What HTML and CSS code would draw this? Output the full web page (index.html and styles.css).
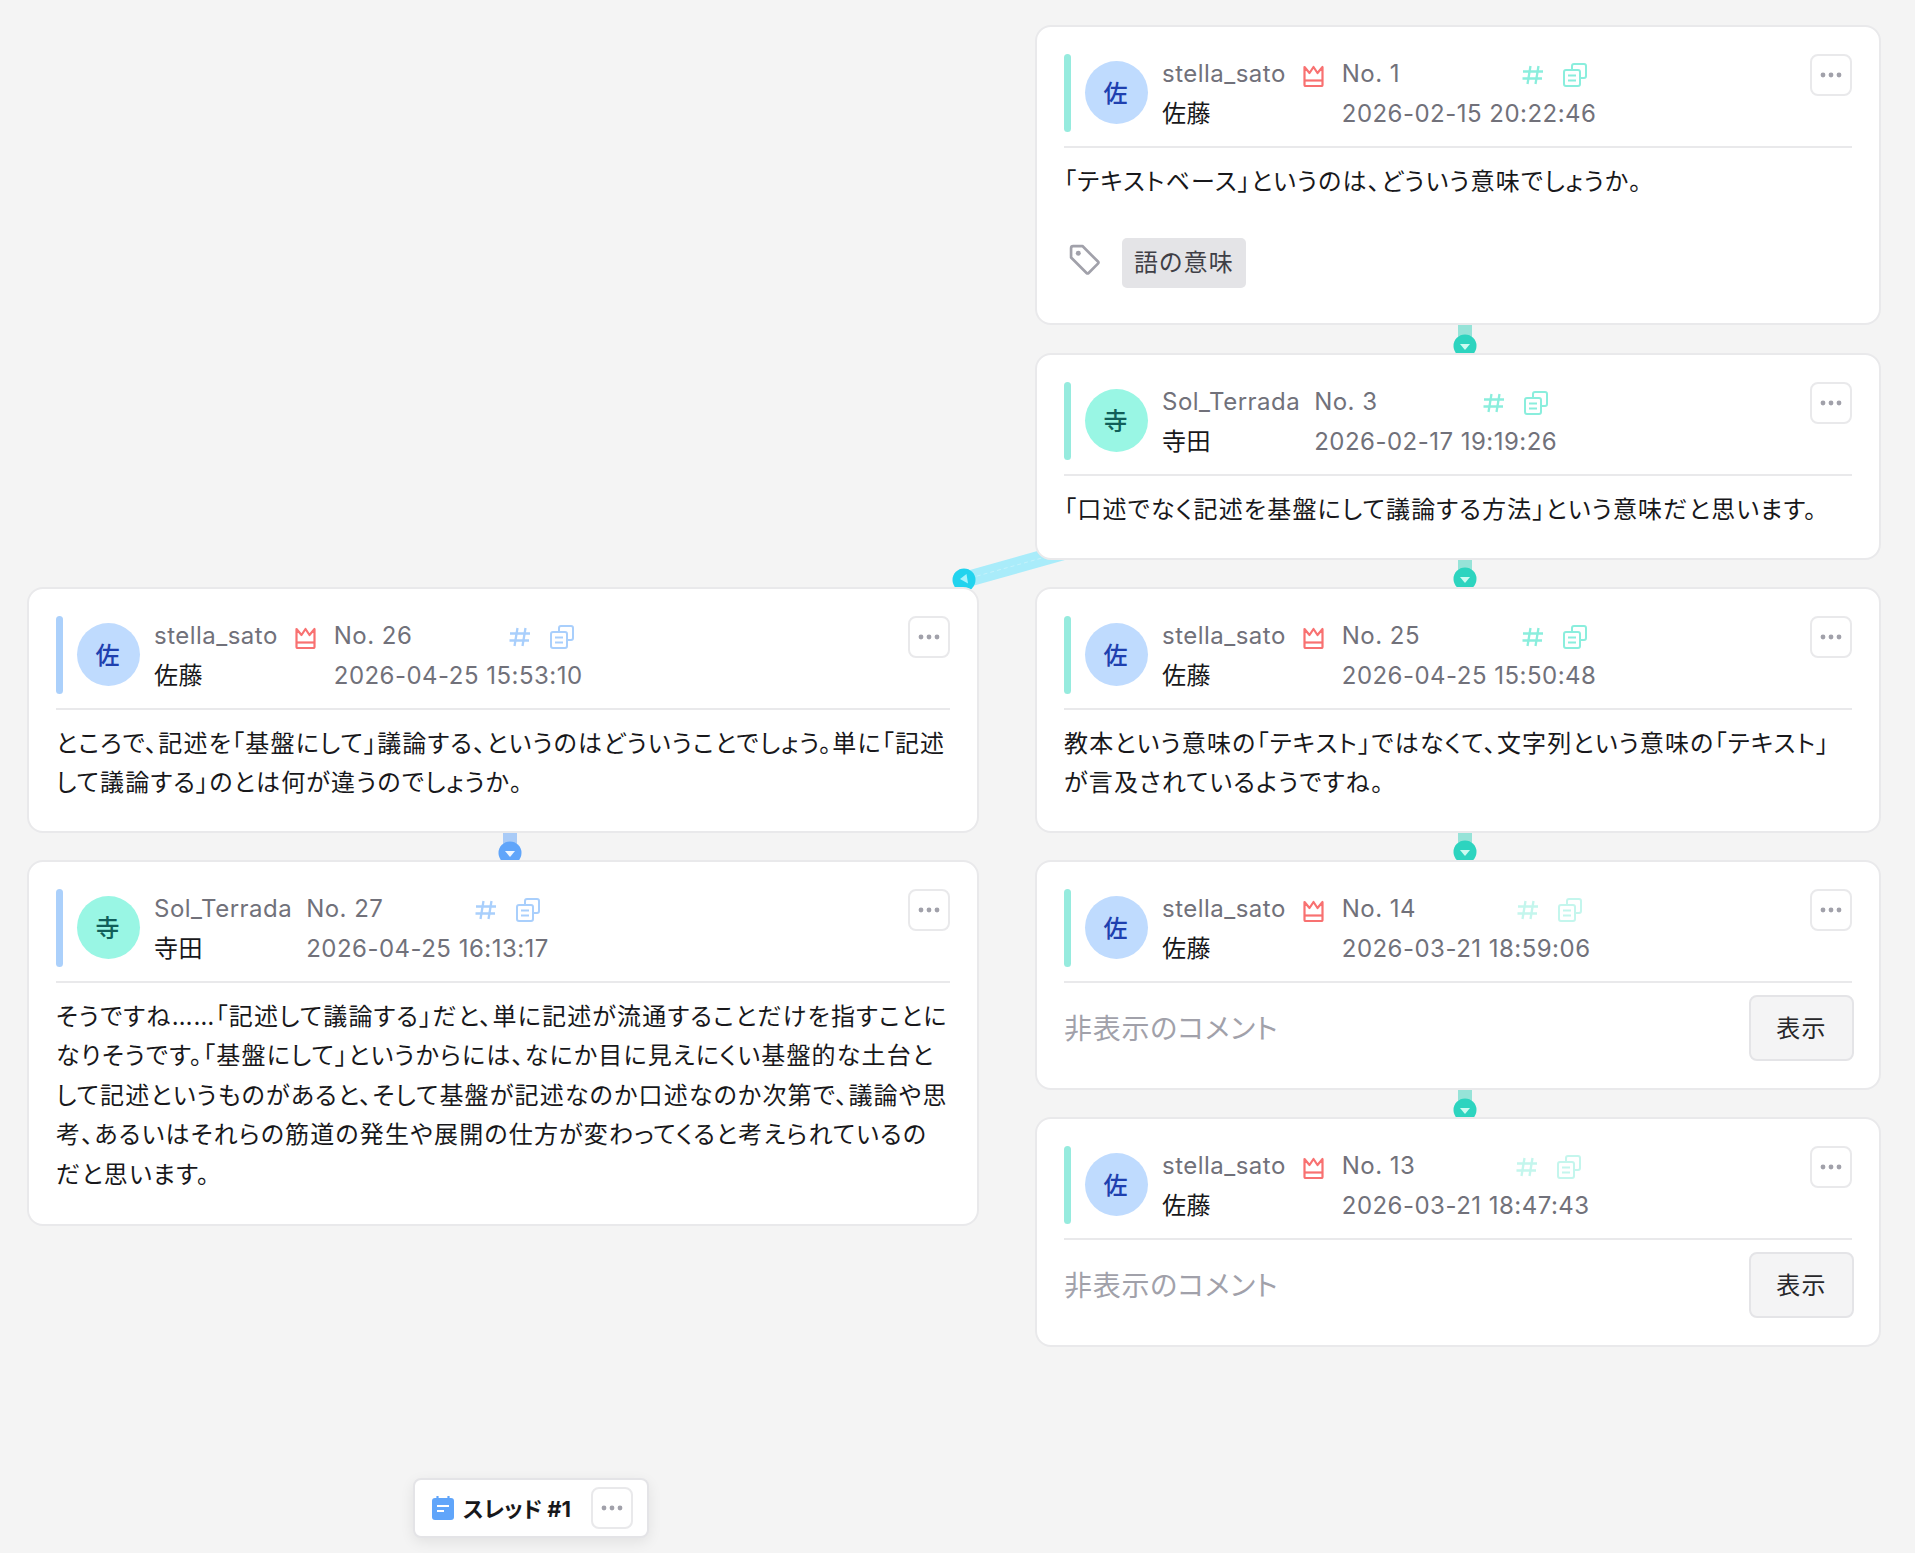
FILE: index.html
```html
<!DOCTYPE html>
<html lang="ja">
<head>
<meta charset="utf-8">
<title>スレッド #1</title>
<link rel="stylesheet" href="styles.css">
</head>
<body>
<svg width="0" height="0" class="defs">
  <defs>
    <symbol id="i-crown" viewBox="0 0 29 22">
      <path d="M5.500 2 L10.500 8 L14.500 2 L18.500 8 L23.500 2 V20 Q23.500 21 22.500 21 H6.500 Q5.500 21 5.500 20 Z" fill="none" stroke="currentColor" stroke-width="2.200" stroke-linejoin="round"/>
      <path d="M5.500 15.500 H23.500" stroke="currentColor" stroke-width="2.200"/>
    </symbol>
    <symbol id="i-hash" viewBox="0 0 22 22">
      <path d="M1 7.500 H21 M0.500 14.500 H20 M8.500 2 L5.500 20 M16.500 2 L13.500 20" fill="none" stroke="currentColor" stroke-width="2.300"/>
    </symbol>
    <symbol id="i-copy" viewBox="0 0 24 24">
      <path d="M9 7 V3 Q9 1 11 1 H21 Q23 1 23 3 V13 Q23 15 21 15 H17" fill="none" stroke="currentColor" stroke-width="2"/>
      <rect x="1" y="7" width="16" height="16" rx="2" fill="none" stroke="currentColor" stroke-width="2"/>
      <path d="M5 12.500 H13 M5 17.500 H13" stroke="currentColor" stroke-width="2"/>
    </symbol>
    <symbol id="i-dots" viewBox="0 0 22 6">
      <circle cx="3" cy="3" r="2.400" fill="currentColor"/>
      <circle cx="11" cy="3" r="2.400" fill="currentColor"/>
      <circle cx="19" cy="3" r="2.400" fill="currentColor"/>
    </symbol>
  </defs>
</svg>

<main class="canvas">
  <svg class="links" width="1915" height="1553" viewBox="0 0 1915 1553">
    <g class="teal">
      <path class="bar" d="M1465 322 V348"/>
      <circle cx="1465" cy="346" r="11.500"/><path class="tri" d="M1460 344 H1470 L1465 350 Z"/>
      <path class="bar" d="M1465 557 V581"/>
      <circle cx="1465" cy="579" r="11.500"/><path class="tri" d="M1460 577 H1470 L1465 583 Z"/>
      <path class="bar" d="M1465 830 V854"/>
      <circle cx="1465" cy="852" r="11.500"/><path class="tri" d="M1460 850 H1470 L1465 856 Z"/>
      <path class="bar" d="M1465 1086 V1112"/>
      <circle cx="1465" cy="1110" r="11.500"/><path class="tri" d="M1460 1108 H1470 L1465 1114 Z"/>
    </g>
    <g class="blue">
      <path class="bar" d="M510 829 V855"/>
      <circle cx="510" cy="853" r="11.500"/><path class="tri" d="M505 851 H515 L510 857 Z"/>
    </g>
    <g class="cyan">
      <path class="bar" d="M964 580 L1110 539"/>
      <path class="dash" d="M970 578 L1060 553"/>
      <circle cx="964" cy="580" r="11.500"/><path class="tri" d="M968 583.500 L960 579 L966.500 574 Z"/>
    </g>
  </svg>

  <article class="card right n1 teal-card">
    <header class="head">
      <div class="avatar av-blue">佐</div>
      <div class="who"><span class="handle">stella_sato</span><span class="real">佐藤</span></div>
      <svg class="crown"><use href="#i-crown"/></svg>
      <div class="meta">
        <div class="meta-top"><span>No. 1</span><span class="tools"><svg class="hash"><use href="#i-hash"/></svg><svg class="copy"><use href="#i-copy"/></svg></span></div>
        <time>2026-02-15 20:22:46</time>
      </div>
      <button class="more"><svg class="dots"><use href="#i-dots"/></svg></button>
    </header>
    <p class="body">「テキストベース」というのは、どういう意味でしょうか。</p>
    <div class="tags">
      <svg class="tag-icon" viewBox="0 0 30 30"><path d="M2 4 Q2 2 4 2 H13 L28 17 Q29 18 28 19 L19 28 Q18 29 17 28 L2 13 Z" fill="none" stroke="currentColor" stroke-width="2.600" stroke-linejoin="round"/><circle cx="9" cy="9" r="2.400" fill="currentColor"/></svg>
      <span class="tag">語の意味</span>
    </div>
  </article>

  <article class="card right n3 teal-card">
    <header class="head">
      <div class="avatar av-teal">寺</div>
      <div class="who"><span class="handle">Sol_Terrada</span><span class="real">寺田</span></div>
      <div class="meta">
        <div class="meta-top"><span>No. 3</span><span class="tools"><svg class="hash"><use href="#i-hash"/></svg><svg class="copy"><use href="#i-copy"/></svg></span></div>
        <time>2026-02-17 19:19:26</time>
      </div>
      <button class="more"><svg class="dots"><use href="#i-dots"/></svg></button>
    </header>
    <p class="body">「口述でなく記述を基盤にして議論する方法」という意味だと思います。</p>
  </article>

  <article class="card right n25 teal-card">
    <header class="head">
      <div class="avatar av-blue">佐</div>
      <div class="who"><span class="handle">stella_sato</span><span class="real">佐藤</span></div>
      <svg class="crown"><use href="#i-crown"/></svg>
      <div class="meta">
        <div class="meta-top"><span>No. 25</span><span class="tools"><svg class="hash"><use href="#i-hash"/></svg><svg class="copy"><use href="#i-copy"/></svg></span></div>
        <time>2026-04-25 15:50:48</time>
      </div>
      <button class="more"><svg class="dots"><use href="#i-dots"/></svg></button>
    </header>
    <p class="body">教本という意味の「テキスト」ではなくて、文字列という意味の「テキスト」が言及されているようですね。</p>
  </article>

  <article class="card right n14 teal-card">
    <header class="head">
      <div class="avatar av-blue">佐</div>
      <div class="who"><span class="handle">stella_sato</span><span class="real">佐藤</span></div>
      <svg class="crown"><use href="#i-crown"/></svg>
      <div class="meta">
        <div class="meta-top"><span>No. 14</span><span class="tools faded"><svg class="hash"><use href="#i-hash"/></svg><svg class="copy"><use href="#i-copy"/></svg></span></div>
        <time>2026-03-21 18:59:06</time>
      </div>
      <button class="more"><svg class="dots"><use href="#i-dots"/></svg></button>
    </header>
    <div class="hidden-row"><span class="hidden-note">非表示のコメント</span><button class="show">表示</button></div>
  </article>

  <article class="card right n13 teal-card">
    <header class="head">
      <div class="avatar av-blue">佐</div>
      <div class="who"><span class="handle">stella_sato</span><span class="real">佐藤</span></div>
      <svg class="crown"><use href="#i-crown"/></svg>
      <div class="meta">
        <div class="meta-top"><span>No. 13</span><span class="tools faded"><svg class="hash"><use href="#i-hash"/></svg><svg class="copy"><use href="#i-copy"/></svg></span></div>
        <time>2026-03-21 18:47:43</time>
      </div>
      <button class="more"><svg class="dots"><use href="#i-dots"/></svg></button>
    </header>
    <div class="hidden-row"><span class="hidden-note">非表示のコメント</span><button class="show">表示</button></div>
  </article>

  <article class="card left n26 blue-card">
    <header class="head">
      <div class="avatar av-blue">佐</div>
      <div class="who"><span class="handle">stella_sato</span><span class="real">佐藤</span></div>
      <svg class="crown"><use href="#i-crown"/></svg>
      <div class="meta">
        <div class="meta-top"><span>No. 26</span><span class="tools"><svg class="hash"><use href="#i-hash"/></svg><svg class="copy"><use href="#i-copy"/></svg></span></div>
        <time>2026-04-25 15:53:10</time>
      </div>
      <button class="more"><svg class="dots"><use href="#i-dots"/></svg></button>
    </header>
    <p class="body">ところで、記述を「基盤にして」議論する、というのはどういうことでしょう。単に「記述して議論する」のとは何が違うのでしょうか。</p>
  </article>

  <article class="card left n27 blue-card">
    <header class="head">
      <div class="avatar av-teal">寺</div>
      <div class="who"><span class="handle">Sol_Terrada</span><span class="real">寺田</span></div>
      <div class="meta">
        <div class="meta-top"><span>No. 27</span><span class="tools"><svg class="hash"><use href="#i-hash"/></svg><svg class="copy"><use href="#i-copy"/></svg></span></div>
        <time>2026-04-25 16:13:17</time>
      </div>
      <button class="more"><svg class="dots"><use href="#i-dots"/></svg></button>
    </header>
    <p class="body">そうですね……「記述して議論する」だと、単に記述が流通することだけを指すことになりそうです。「基盤にして」というからには、なにか目に見えにくい基盤的な土台として記述というものがあると、そして基盤が記述なのか口述なのか次第で、議論や思考、あるいはそれらの筋道の発生や展開の仕方が変わってくると考えられているのだと思います。</p>
  </article>

  <nav class="thread">
    <svg class="thread-icon" viewBox="0 0 22 24"><rect x="0" y="2" width="22" height="22" rx="3" fill="currentColor"/><path d="M5.500 0.500 V4 M16.500 0.500 V4" stroke="currentColor" stroke-width="2.200" stroke-linecap="round"/><path d="M5 10 H17 M5 15 H12" stroke="#fff" stroke-width="2.200"/></svg>
    <span class="thread-title">スレッド #1</span>
    <button class="more"><svg class="dots"><use href="#i-dots"/></svg></button>
  </nav>
</main>
</body>
</html>
```
FILE: styles.css
```css
* { box-sizing: border-box; }
html, body { margin: 0; padding: 0; }
body {
  background: #f4f4f4;
  font-family: Inter, "Noto Sans CJK JP", sans-serif;
  color: #18181b;
}
.defs { position: absolute; }
.canvas { position: relative; width: 1915px; height: 1553px; overflow: hidden; }

.links { position: absolute; left: 0; top: 0; }
.links .bar { fill: none; stroke-width: 14; }
.teal .bar { stroke: #96e3d8; }
.teal circle { fill: #2dd4bf; }
.teal .tri { fill: #ccfbf1; }
.blue .bar { stroke: #a9cbf7; }
.blue circle { fill: #60a5fa; }
.blue .tri { fill: #eff6ff; }
.links .cyan .bar { stroke: #a9ecfa; stroke-width: 16; }
.cyan circle { fill: #22d3ee; }
.cyan .tri { fill: #a5f3fc; }
.cyan .dash { stroke: #c4f2fb; stroke-width: 1; stroke-dasharray: 4 3; fill: none; }

.card {
  position: absolute;
  background: #fff;
  border: 2px solid #e9e9eb;
  border-radius: 16px;
  padding: 27px;
}
.right { left: 1035px; width: 846px; }
.left { left: 27px; width: 952px; }
.n1 { top: 25px; height: 300px; }
.n3 { top: 353px; height: 207px; }
.n25 { top: 587px; height: 246px; }
.n14 { top: 860px; height: 230px; }
.n13 { top: 1117px; height: 230px; }
.n26 { top: 587px; height: 246px; }
.n27 { top: 860px; height: 366px; }

.head {
  display: flex;
  align-items: stretch;
  padding-bottom: 13px;
  border-bottom: 2px solid #e9e9eb;
}
.head::before {
  content: "";
  width: 7px;
  height: 78px;
  border-radius: 4px;
  margin-right: 14px;
  flex: none;
}
.teal-card .head::before { background: #96ebde; }
.blue-card .head::before { background: #abd0fb; }
.teal-card .hash, .teal-card .copy { color: #8aeedd; }
.blue-card .hash, .blue-card .copy { color: #a9cffc; }

.avatar {
  width: 63px;
  height: 63px;
  border-radius: 50%;
  display: flex;
  align-items: center;
  justify-content: center;
  font-size: 24px;
  font-weight: 500;
  margin: 7px 14px 0 0;
  padding: 0 2px 2px 0;
  flex: none;
}
.av-blue { background: #bfdbfe; color: #1e40af; }
.av-teal { background: #99f6e4; color: #115e59; }

.who { display: flex; flex-direction: column; }
.handle, .meta-top, time {
  height: 39px;
  line-height: 39px;
  font-size: 24px;
  color: #71717a;
  letter-spacing: .02em;
  white-space: nowrap;
}
.real { height: 39px; line-height: 39px; margin-top: 1px; font-size: 24px; letter-spacing: .02em; color: #18181b; }
time { margin-top: 1px; }

.crown { width: 29px; height: 22px; color: #f87171; margin: 11px 0 0 13px; flex: none; }
.meta { display: flex; flex-direction: column; margin-left: 14px; }
.meta-top { display: flex; align-items: center; justify-content: space-between; }
.tools { display: flex; align-items: center; gap: 19px; padding: 2px 9px 0 0; }
.faded { opacity: .5; }
.hash { width: 22px; height: 22px; }
.copy { width: 24px; height: 24px; }

.more {
  margin-left: auto;
  width: 42px;
  height: 42px;
  border: 2px solid #e9e9eb;
  border-radius: 8px;
  background: #fff;
  padding: 0;
  display: flex;
  align-items: center;
  justify-content: center;
  flex: none;
}
.dots { width: 22px; height: 6px; color: #a1a1aa; }

.body {
  margin: 13.500px 0 0;
  font-size: 24px;
  line-height: 39.600px;
  letter-spacing: .05em;
  font-feature-settings: "palt";
  color: #18181b;
}

.tags { display: flex; align-items: center; margin-top: 37px; padding-left: 5px; }
.tag-icon { width: 31px; height: 31px; color: #a1a1aa; margin: -8px 22px 0 0; }
.tag {
  background: #e4e4e7;
  border-radius: 5px;
  height: 50px;
  line-height: 50px;
  padding: 0 12px;
  font-size: 24px;
  letter-spacing: .05em;
  color: #3f3f46;
  font-feature-settings: "palt";
}

.hidden-row { display: flex; align-items: center; justify-content: space-between; margin-top: 12px; }
.hidden-note { font-size: 28px; letter-spacing: .025em; color: #a1a1aa; font-feature-settings: "palt"; margin-top: -2px; }
.show {
  width: 105px;
  height: 66px;
  margin-right: -2px;
  padding: 0 0 3px;
  background: #f4f4f5;
  border: 2px solid #e4e4e7;
  border-radius: 8px;
  font: inherit;
  font-size: 24px;
  letter-spacing: .05em;
  color: #27272a;
}

.thread {
  position: absolute;
  left: 413px;
  top: 1478px;
  width: 236px;
  height: 60px;
  background: #fff;
  border: 2px solid #e4e4e7;
  border-radius: 8px;
  box-shadow: 0 4px 14px rgba(0, 0, 0, .08);
  display: flex;
  align-items: center;
  padding: 0 14px 0 17px;
}
.thread-icon { width: 22px; height: 24px; color: #60a5fa; flex: none; }
.thread-title { font-size: 22px; font-weight: 700; margin-left: 9px; padding-bottom: 3px; white-space: nowrap; font-feature-settings: "palt"; }
```
